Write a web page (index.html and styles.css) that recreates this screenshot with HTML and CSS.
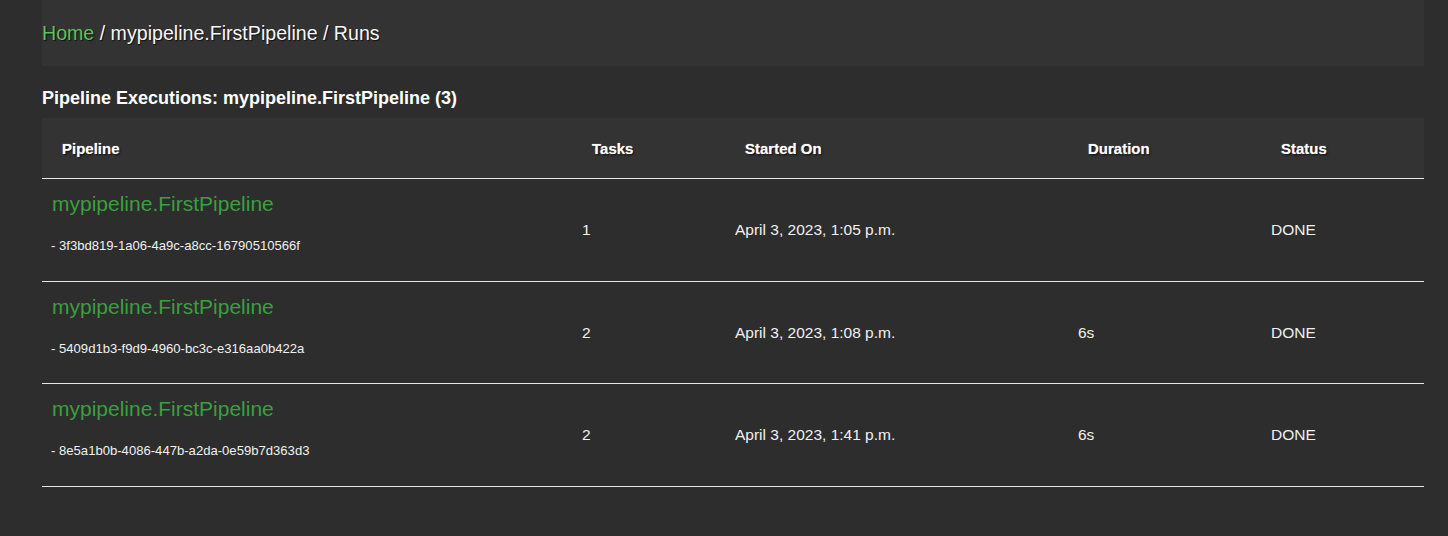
FILE: index.html
```html
<!DOCTYPE html>
<html>
<head>
<meta charset="utf-8">
<link rel="stylesheet" href="styles.css">
</head>
<body>
<div class="page">
  <nav class="crumbs"><a class="home" href="#">Home</a> / mypipeline.FirstPipeline / Runs</nav>
  <h2 class="title">Pipeline Executions: mypipeline.FirstPipeline (3)</h2>
  <table class="runs">
    <colgroup>
      <col class="c1"><col class="c2"><col class="c3"><col class="c4"><col class="c5">
    </colgroup>
    <thead>
      <tr><th>Pipeline</th><th>Tasks</th><th>Started On</th><th>Duration</th><th>Status</th></tr>
    </thead>
    <tbody>
      <tr>
        <td class="pipe"><a class="plink" href="#">mypipeline.FirstPipeline</a><div class="uuid">- 3f3bd819-1a06-4a9c-a8cc-16790510566f</div></td>
        <td>1</td><td>April 3, 2023, 1:05 p.m.</td><td></td><td>DONE</td>
      </tr>
      <tr>
        <td class="pipe"><a class="plink" href="#">mypipeline.FirstPipeline</a><div class="uuid">- 5409d1b3-f9d9-4960-bc3c-e316aa0b422a</div></td>
        <td>2</td><td>April 3, 2023, 1:08 p.m.</td><td>6s</td><td>DONE</td>
      </tr>
      <tr>
        <td class="pipe"><a class="plink" href="#">mypipeline.FirstPipeline</a><div class="uuid">- 8e5a1b0b-4086-447b-a2da-0e59b7d363d3</div></td>
        <td>2</td><td>April 3, 2023, 1:41 p.m.</td><td>6s</td><td>DONE</td>
      </tr>
    </tbody>
  </table>
</div>
</body>
</html>
```
FILE: styles.css
```css
html, body {
  margin: 0;
  padding: 0;
  background: #2d2d2d;
  color: #f2f2f2;
  font-family: "Liberation Sans", Arial, Helvetica, sans-serif;
}
.page {
  padding: 0 24px 0 42px;
}
.crumbs {
  display: flex;
  align-items: center;
  height: 66px;
  background: #333333;
  font-size: 19.6px;
  color: #f6f6f6;
  white-space: pre;
  text-shadow: 1px 1px 1px rgba(0,0,0,0.7);
}
.crumbs .home {
  color: #5cc15c;
  text-decoration: none;
}
.title {
  margin: 22px 0 10px;
  font-size: 18px;
  line-height: 20px;
  font-weight: bold;
  color: #ffffff;
}
.runs {
  width: 100%;
  border-collapse: collapse;
  table-layout: fixed;
}
.c1 { width: 530px; }
.c2 { width: 153px; }
.c3 { width: 343px; }
.c4 { width: 193px; }
.c5 { width: 163px; }
.runs thead tr {
  background: #333333;
}
.runs th {
  height: 60px;
  padding: 0 0 0 20px;
  text-align: left;
  font-size: 15px;
  font-weight: bold;
  color: #ffffff;
  text-shadow: 1px 1px 2px rgba(0,0,0,0.9), 0 0 1px #fff;
  border-bottom: 1px solid #e6e6e6;
}
.runs td {
  padding: 0 0 0 10px;
  font-size: 15.5px;
  color: #f0f0f0;
  vertical-align: middle;
  border-bottom: 1px solid #e6e6e6;
}
.runs td.pipe {
  padding: 13px 0 27.7px 10px;
}
.plink {
  display: block;
  font-size: 21px;
  line-height: 24px;
  color: #3a9f3e;
  text-decoration: none;
}
.uuid {
  margin-top: 22px;
  margin-left: -1px;
  font-size: 13.1px;
  line-height: 15px;
  color: #f0f0f0;
}
```
